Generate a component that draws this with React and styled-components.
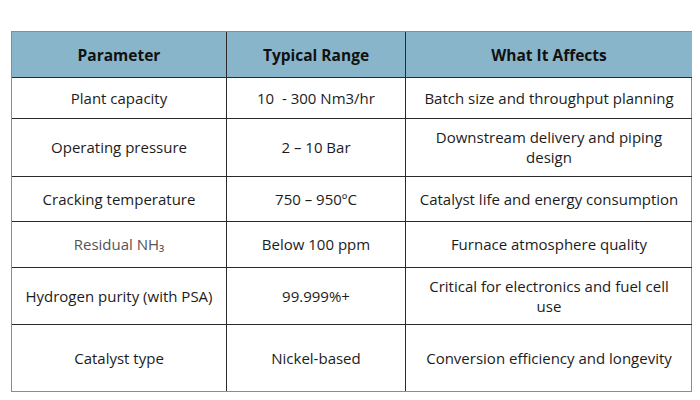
import React from "react";
import styled, { createGlobalStyle } from "styled-components";

const Global = createGlobalStyle`
  html, body { margin: 0; padding: 0; background: #ffffff; }
  body { font-family: "Open Sans", "Noto Sans", sans-serif; }
`;

const Page = styled.div`
  width: 700px;
  height: 400px;
  padding: 31px 0 0 11px;
  box-sizing: border-box;
`;

const Table = styled.div`
  display: grid;
  grid-template-columns: 215px 179px 286px;
  width: 681px;
  box-sizing: border-box;
  border: 1px solid #8c8c8c;
`;

const Cell = styled.div`
  display: flex;
  align-items: center;
  justify-content: center;
  text-align: center;
  box-sizing: border-box;
  height: ${(p) => p.$h}px;
  padding: 0 12px;
  font-size: 15px;
  line-height: 20px;
  white-space: pre-wrap;
  color: ${(p) => (p.$muted ? "#555555" : "#1c1c1c")};
  border-right: ${(p) => (p.$last ? "none" : "1px solid #2a2a2a")};
  border-bottom: ${(p) => (p.$bottom ? "none" : "1px solid #2a2a2a")};
`;

const HeadCell = styled(Cell)`
  background: #88b5c9;
  font-weight: 700;
  font-size: 15.5px;
  color: #111111;
`;

const rows = [
  { h: 40.5, c: ["Plant capacity", "10  - 300 Nm3/hr", "Batch size and throughput planning"] },
  { h: 58, c: ["Operating pressure", "2 – 10 Bar", "Downstream delivery and piping design"] },
  { h: 45.5, c: ["Cracking temperature", "750 – 950ºC", "Catalyst life and energy consumption"] },
  { h: 45.5, c: ["Residual NH₃", "Below 100 ppm", "Furnace atmosphere quality"], muted: true },
  { h: 57, c: ["Hydrogen purity (with PSA)", "99.999%+", "Critical for electronics and fuel cell use"] },
  { h: 66.5, c: ["Catalyst type", "Nickel-based", "Conversion efficiency and longevity"] },
];

const headers = ["Parameter", "Typical Range", "What It Affects"];

export default function App() {
  return (
    <>
      <Global />
      <Page>
        <Table>
          {headers.map((t, i) => (
            <HeadCell key={t} $h={46} $last={i === 2}>
              {t}
            </HeadCell>
          ))}
          {rows.map((r, ri) =>
            r.c.map((t, ci) => (
              <Cell
                key={ri + "-" + ci}
                $h={r.h}
                $last={ci === 2}
                $bottom={ri === rows.length - 1}
                $muted={r.muted && ci === 0}
              >
                {t}
              </Cell>
            ))
          )}
        </Table>
      </Page>
    </>
  );
}
